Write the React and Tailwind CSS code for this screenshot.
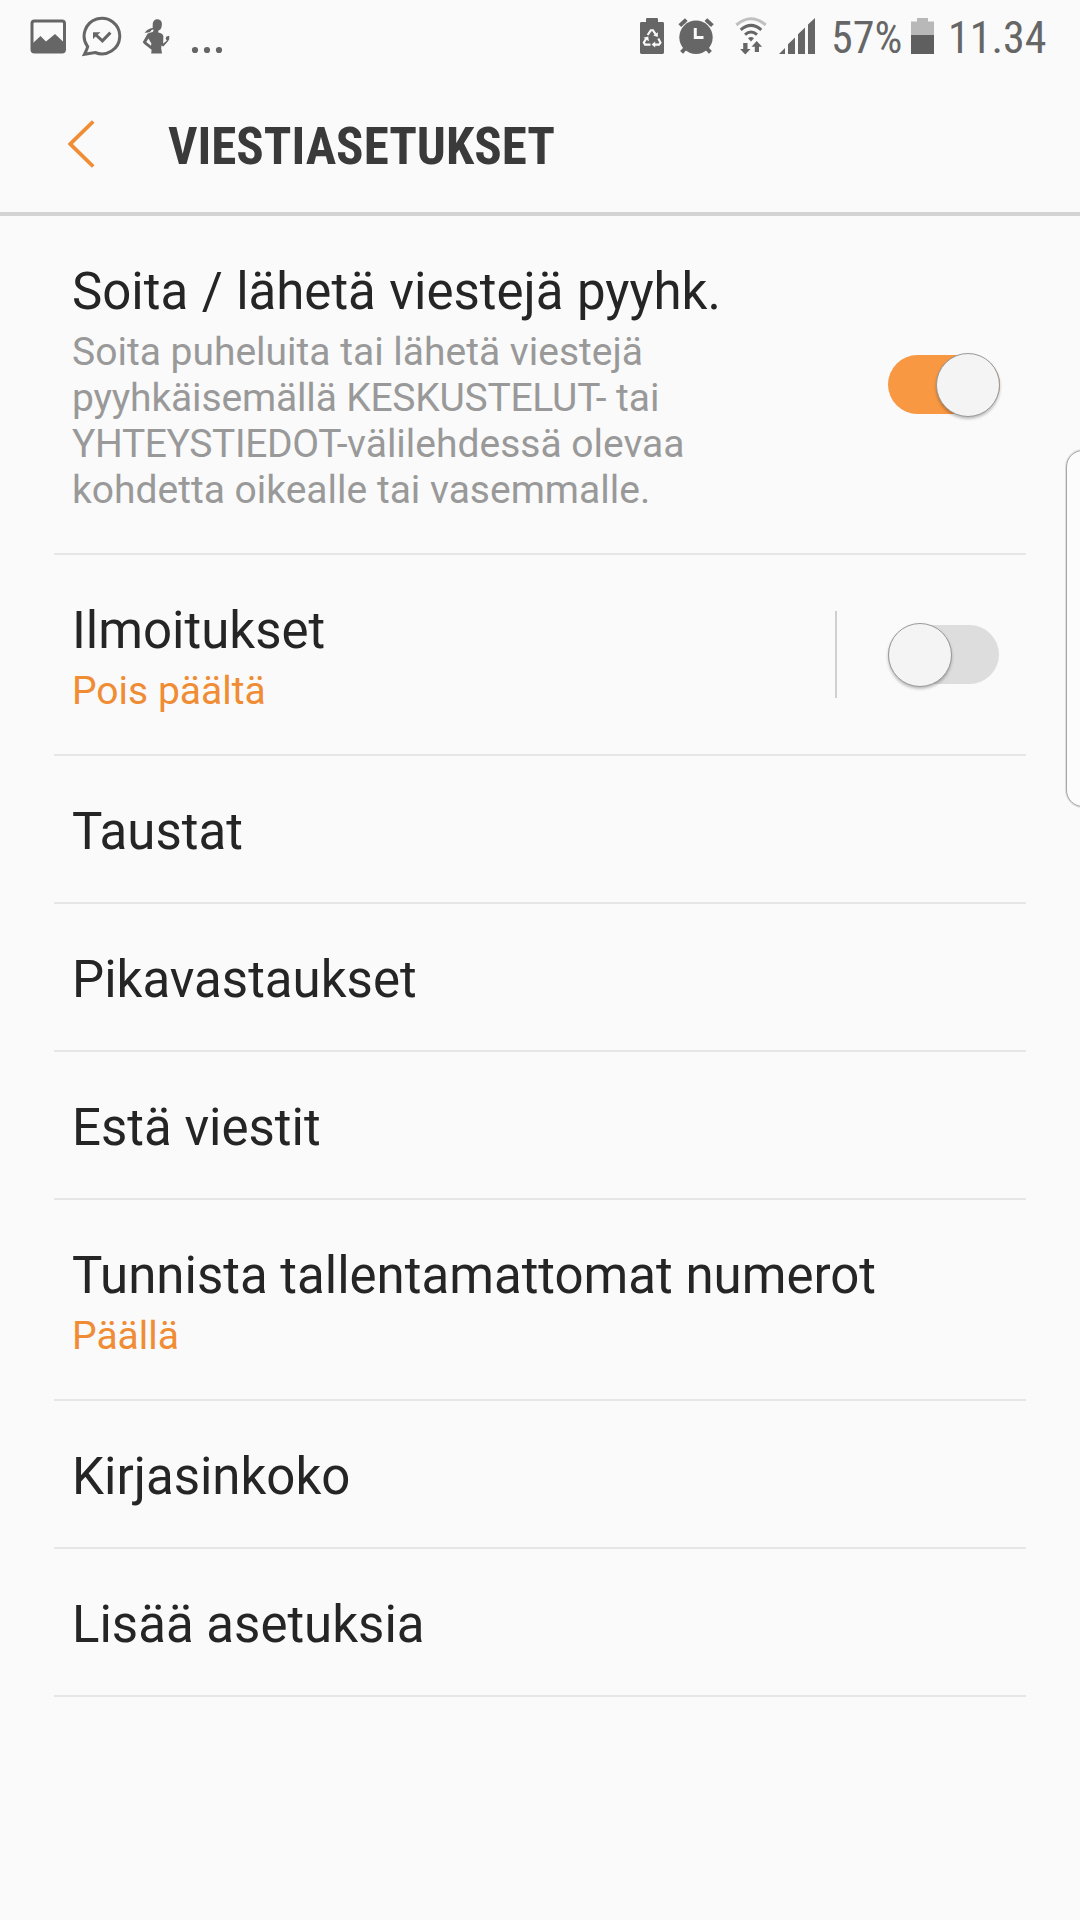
const rows = [
  {
    title: "Soita / lähetä viestejä pyyhk.",
    description: true,
    control: "on",
  },
  { title: "Ilmoitukset", status: "Pois päältä", control: "off", separator: true },
  { title: "Taustat" },
  { title: "Pikavastaukset" },
  { title: "Estä viestit" },
  { title: "Tunnista tallentamattomat numerot", status: "Päällä" },
  { title: "Kirjasinkoko" },
  { title: "Lisää asetuksia" },
];

function ImageIcon() {
  return (
    <svg className="mt-px h-[36px] w-[37px]" viewBox="30 18.5 37 36">
      <rect x="32" y="20.5" width="32.5" height="31" rx="2.5" fill="none" stroke="#666" strokeWidth="3" />
      <path d="M33 42.5L40.5 35.5L46 41L55 33.5L64 42V52H33Z" fill="#666" />
    </svg>
  );
}

function ChatIcon() {
  return (
    <svg className="h-[42px] w-[40px]" viewBox="82 15 40 42" fill="none" stroke="#666">
      <path d="M87.7 46.7A17.8 17.8 0 1 1 95.2 52.5L84.5 54.3Q87 49.5 87.7 46.7Z" strokeWidth="3" />
      <path d="M95.5 34.5L102.4 40.8L110.4 32.6" strokeWidth="3" />
      <path d="M93 32.2H100.5L93 39Z" fill="#666" stroke="none" />
    </svg>
  );
}

function RunnerIcon() {
  return (
    <svg className="h-[36px] w-[28px]" viewBox="142 18 28 36" fill="#666">
      <path d="M152.8 23C153.5 20.2 155.2 19 157.6 19.2C160.6 19.4 162 21.5 161.9 24C161.8 27.3 161 30 158.8 30.2L157.9 32.2Q163 33.3 163.4 36.2L163.1 43.4L166.8 40.8L165.6 38.6L166.4 36.4L169.3 35.8L169.2 39.3L167.8 41.6L163.3 46.4L161.4 45.4L161.2 48.5L162 53.4H151.2L151.6 49.8L144.8 44.4L142.7 42.2L147.5 33.8Q149 32.5 152.7 32L153.6 30.2Q152.1 27 152.8 23ZM148.4 38.4L146.3 42L151 45.8L151.4 43.4Z" />
      <path d="M154 27.6L150.2 28.4Q147 29 144.6 32.8Q150.5 33.2 151.8 29.8L154 29.6Z" />
    </svg>
  );
}

function DotsIcon() {
  return (
    <svg className="h-[8px] w-[32px]" viewBox="192 46 32 8" fill="#666">
      <circle cx="196" cy="50" r="3.1" />
      <circle cx="208" cy="50" r="3.1" />
      <circle cx="220" cy="50" r="3.1" />
    </svg>
  );
}

function SaverBatteryIcon() {
  return (
    <svg className="h-[36px] w-[24px]" viewBox="640 18 24 36">
      <path d="M646 22V19.2Q646 18 647.2 18H656.8Q658 18 658 19.2V22H662.6Q664 22 664 23.4V52.6Q664 54 662.6 54H641.4Q640 54 640 52.6V23.4Q640 22 641.4 22Z" fill="#666" />
      <g fill="none" stroke="#fafafa" strokeWidth="2.1">
        <path d="M647.6 35L650.8 30.3H653L656 34.8" />
        <path d="M658.3 38.4L660.5 42.6L659 44.6H653.5" />
        <path d="M650.5 44.6H645L643.8 42.6L646.4 38.2" />
      </g>
      <g fill="#fafafa">
        <path d="M657.8 32.2V36.9L653.2 35.6Z" />
        <path d="M655.2 41.4V47.6L651.6 44.6Z" />
        <path d="M643.4 37.8L648.2 36.6L648.9 41.2Z" />
      </g>
    </svg>
  );
}

function AlarmIcon() {
  return (
    <svg className="h-[36px] w-[36px]" viewBox="678 18 36 36">
      <g stroke="#666" strokeWidth="4">
        <path d="M679.8 25.6L686.3 19.6" />
        <path d="M712.4 25.6L705.9 19.6" />
        <path d="M686.5 47L681.6 52.4" />
        <path d="M705.5 47L710.4 52.4" />
      </g>
      <circle cx="696" cy="37.3" r="16.7" fill="#666" />
      <path d="M695.3 28V37.6H703.5" fill="none" stroke="#fafafa" strokeWidth="3" />
    </svg>
  );
}

function WifiIcon() {
  return (
    <svg className="h-[38px] w-[32px]" viewBox="734.5 17 32 38" fill="none" stroke="#666" strokeWidth="3">
      <path d="M735.8 25Q750.5 12.4 765.2 25" stroke="#c0c0c0" />
      <path d="M740.2 29.8Q750.5 21 760.8 29.8" />
      <path d="M744.5 34.6Q750.5 29.4 756.5 34.6" />
      <path d="M747.5 38.2Q750.5 35.8 753.5 38.2L750.5 41.6Z" fill="#666" stroke="none" />
      <g fill="#666" stroke="none">
        <path d="M742.7 43H747V49H750L744.8 54.4L739.6 49H742.7Z" />
        <path d="M754.3 52V46.8H751L756.2 41L761.6 46.8H758.5V52Z" />
      </g>
    </svg>
  );
}

function SignalIcon() {
  return (
    <svg className="h-[36px] w-[36px]" viewBox="779 18 36 36" fill="#666">
      <path d="M779 54L785 48V54Z" />
      <path d="M788 54V44.3L795 37.6V54Z" />
      <path d="M798 54V34.3L805 27.6V54Z" />
      <path d="M808 54V24.5L815 18V54Z" />
    </svg>
  );
}

function BatteryIcon() {
  return (
    <svg className="h-[36px] w-[23px]" viewBox="0 0 23 36">
      <path d="M6 0H17V3.5H23V17H0V3.5H6Z" fill="#b8b8b8" />
      <path d="M0 17H23V36H0Z" fill="#5f5f5f" />
    </svg>
  );
}

function StatusBar() {
  return (
    <div className="flex h-[72px] items-center pr-[32px] pl-[30px] text-[44px] leading-[54px] text-[#666]">
      <ImageIcon />
      <div className="ml-[15px]"><ChatIcon /></div>
      <div className="ml-[20px]"><RunnerIcon /></div>
      <div className="mt-[28px] ml-[21px]"><DotsIcon /></div>
      <div className="ml-auto flex h-[72px] items-center font-['Roboto_Condensed','Roboto',sans-serif]">
        <SaverBatteryIcon />
        <div className="ml-[14px]"><AlarmIcon /></div>
        <div className="ml-[20.5px]"><WifiIcon /></div>
        <div className="ml-[12.5px]"><SignalIcon /></div>
        <span className="mt-[4px] ml-[16px] w-[80px]">57%</span>
        <BatteryIcon />
        <span className="mt-[4px] ml-[14px] w-[100px]">11.34</span>
      </div>
    </div>
  );
}

function Header() {
  return (
    <header className="flex h-[144px] items-center border-b-4 border-[#d3d3d3] pl-[68px]">
      <svg className="mt-[4px] h-[48px] w-[28px]" viewBox="0 0 28 48" fill="none" stroke="#ef8c34" strokeWidth="3.8">
        <path d="M25.2 1.5L2.3 24L25.2 46.5" />
      </svg>
      <h1 className="mt-[9px] ml-[72px] font-['Roboto_Condensed','Roboto',sans-serif] text-[51px] leading-[60px] font-bold text-[#3a3a3a]">
        VIESTIASETUKSET
      </h1>
    </header>
  );
}

function Switch({ on }) {
  return (
    <div
      role="switch"
      aria-checked={on}
      className={`flex h-[59px] shrink-0 items-center rounded-full ${on ? "w-[112px] justify-end bg-[#f89843]" : "mr-px w-[111px] justify-start bg-[#dddddd]"}`}
    >
      <div className="h-[64px] w-[64px] shrink-0 rounded-full border border-[#999] bg-[#f4f4f4] shadow-[0_2px_3px_rgba(0,0,0,0.25)]" />
    </div>
  );
}

function Description() {
  return (
    <p className="mt-[7px] text-[39px] leading-[46px] whitespace-nowrap text-[#999]">
      Soita puheluita tai lähetä viestejä
      <br />
      <span className="tracking-[-0.16px]">pyyhkäisemällä </span>
      <span className="tracking-[-0.25px]">KESKUSTELUT-</span> tai
      <br />
      <span className="tracking-[-0.38px]">YHTEYSTIEDOT-</span>välilehdessä olevaa
      <br />
      kohdetta oikealle tai vasemmalle.
    </p>
  );
}

function Row({ title, description, status, control, separator }) {
  return (
    <li className="flex items-center border-b-2 border-[#e6e6e6] pr-[26px] pl-[18px]">
      <div className="flex-1 pt-[46px] pb-[40px]">
        <h2 className={`text-[51px] leading-[60px] whitespace-nowrap text-[#252525] ${description ? "[word-spacing:0.8px]" : ""}`}>
          {title}
        </h2>
        {description && <Description />}
        {status && <p className="mt-[7px] text-[39px] leading-[46px] text-[#ef8c34]">{status}</p>}
      </div>
      {separator && <div className="mr-[51px] h-[87px] w-[2px] bg-[#cfcfcf]" />}
      {control && <Switch on={control === "on"} />}
    </li>
  );
}

export default function App() {
  return (
    <div className="relative h-[1920px] w-[1080px] overflow-hidden bg-[#fafafa] font-['Roboto',sans-serif]">
      <StatusBar />
      <Header />
      <ul className="mx-[54px]">
        {rows.map((row) => (
          <Row key={row.title} {...row} />
        ))}
      </ul>
      <div className="absolute top-[450px] -right-[20px] h-[357px] w-[34px] rounded-[22px] border border-[#a8a8a8] bg-[#fcfcfc] shadow-[0_0_0_1px_#dedede]" />
    </div>
  );
}
